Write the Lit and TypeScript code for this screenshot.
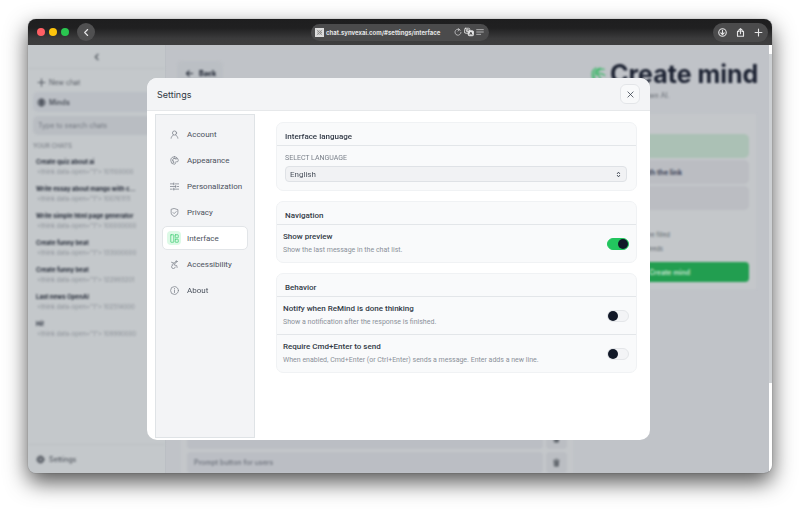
import { LitElement, html, css, svg } from "lit";
import { customElement, state } from "lit/decorators.js";

const icons = {
  back: svg`<path d="M15 4l-8 8 8 8" />`,
  arrow: svg`<path d="M20 12H4M11 5l-7 7 7 7" />`,
  plus: svg`<path d="M12 3v18M3 12h18" />`,
  close: svg`<path d="M5 5l14 14M19 5L5 19" />`,
  site: svg`<path d="M4 4l16 16M20 4L4 20" /><circle cx="12" cy="12" r="6" />`,
  reload: svg`<path d="M19 7a9 9 0 1 0 2 6M12 1l5 4-5 4" />`,
  translate: svg`<rect x="1" y="3" width="13" height="12" rx="3" /><path d="M4 7h7M7.500 6v1c0 3-2 4-3 5M6 9l4 3" /><rect x="10" y="9" width="13" height="12" rx="3" fill="currentColor" /><path d="M14 18l2.500-6 2.500 6M15 16h3" stroke="#444" />`,
  reader: svg`<path d="M2 5h20M2 12h20M2 19h12" />`,
  download: svg`<circle cx="12" cy="12" r="10" /><path d="M12 6v11M7.500 13l4.500 4.500 4.500-4.500" />`,
  share: svg`<path d="M8 9H4v13h16V9h-4M12 15V2M7.500 6L12 1.500 16.500 6" />`,
  account: svg`<circle cx="12" cy="8" r="5.500" /><path d="M3 22c.5-4.500 3-7 6-8.500M21 22c-.5-4.500-3-7-6-8.500" />`,
  palette: svg`<path d="M12 2a10 10 0 1 0 0 20c2 0 2.600-1.500 2-3-.8-2 .5-3.500 2.500-3.500H19c2 0 3-1.500 3-3.500 0-5.500-4.500-10-10-10z" /><circle cx="7" cy="11" r="1" /><circle cx="10.500" cy="6.800" r="1" /><circle cx="15.500" cy="7.500" r="1" /><circle cx="8.500" cy="16" r="1" />`,
  sliders: svg`<path d="M1 5h9M14 5h9M10 2.500v5M1 12h14M19 12h4M15 9.500v5M1 19h5M10 19h13M10 16.500v5" />`,
  shield: svg`<path d="M12 1.500l9 3V12c0 5.500-4 8.800-9 10.500C7 20.800 3 17.500 3 12V4.500z" /><path d="M8 12l3 3 5.500-5.500" />`,
  layout: svg`<rect x="2" y="2" width="8" height="20" rx="1" /><rect x="14" y="2" width="8" height="8" rx="1" /><rect x="14" y="14" width="8" height="8" rx="1" />`,
  accessibility: svg`<circle cx="17" cy="4" r="2" /><path d="M4 6l6 2 5-1-4 6 7 2 1 5M10 8l-4 4M8 13a5 5 0 1 0 6 6" />`,
  info: svg`<circle cx="12" cy="12" r="10.500" /><path d="M12 11v6.500M12 6.500v1" />`,
  updown: svg`<path d="M8 9l4-5 4 5M8 15l4 5 4-5" />`,
  brain: svg`<circle cx="12" cy="12" r="10" fill="currentColor" opacity=".6" /><path d="M12 3v18M7 7c2 0 3 1 3 3M17 7c-2 0-3 1-3 3M7 16c2 0 3-1 3-3M17 16c-2 0-3-1-3-3" />`,
  gear: svg`<circle cx="12" cy="12" r="8" fill="currentColor" /><circle cx="12" cy="12" r="10" stroke-dasharray="4 3" /><circle cx="12" cy="12" r="3" stroke="#c4c7cb" />`,
  trash: svg`<path d="M4 6h16M9 3h6" /><path d="M6 8h12l-1 14H7z" fill="currentColor" />`,
  leaf: svg`<path d="M9 3C3 6 1 14 6 21M7 19C5 12 8 6 15 3M10 12c1-5 5-8 11-7M10 12c4-2 8-1 12 2M10 13c3 1 6 4 6 9" />`,
};

const icon = (name: keyof typeof icons) =>
  html`<svg class="icon ${name}" viewBox="0 0 24 24" aria-hidden="true">${icons[name]}</svg>`;

const base = css`
  * { box-sizing: border-box; margin: 0; }
  button, input, select { font: inherit; color: inherit; }
  button { border: 0; background: none; padding: 0; display: flex; align-items: center; }
  ul { list-style: none; padding: 0; }
  a { color: inherit; text-decoration: none; }
  .icon { width: 9px; height: 9px; flex: none; fill: none; stroke: currentColor; stroke-width: 2; stroke-linecap: round; stroke-linejoin: round; }
`;

@customElement("browser-bar")
class BrowserBar extends LitElement {
  static styles = [base, css`
    :host { display: grid; grid-template-columns: 1fr 178px 1fr; align-items: center; height: 26px; padding: 0 4px; background: linear-gradient(#1e1e1f, #202021 35%, #3b3b3c 75%, #3e3e3f); color: #e4e4e5; }
    .side { display: flex; align-items: center; gap: 4px; padding-left: 5px; }
    .dot { width: 8px; height: 8px; border-radius: 50%; background: #ff5f64; }
    .dot.min { background: #fdc40c; }
    .dot.max { background: #2ac650; }
    .back-btn { width: 18px; height: 18px; border-radius: 50%; background: #505051; justify-content: center; margin-left: 4px; }
    .address { display: flex; align-items: center; height: 17px; border-radius: 9px; padding: 0 5px 0 4px; gap: 2px; background: #4b4b4c; font-size: 6px; font-weight: 700; }
    .address a { flex: 1; white-space: nowrap; }
    .favicon { width: 9px; height: 9px; background: #ddd; display: grid; place-items: center; color: #777; }
    .favicon .icon { width: 7px; height: 7px; }
    .address > button .icon { width: 8px; height: 8px; }
    .address > button .translate { width: 10px; height: 10px; }
    .tools { justify-self: end; display: flex; align-items: center; gap: 9px; height: 19px; padding: 0 5px; border-radius: 10px; background: #4b4b4c; }
    .tools .icon { stroke-width: 3; }
    .back { stroke-width: 3; }
  `];
  render() {
    return html`
      <div class="side">
        <span class="dot"></span><span class="dot min"></span><span class="dot max"></span>
        <button class="back-btn" aria-label="Back">${icon("back")}</button>
      </div>
      <div class="address">
        <span class="favicon">${icon("site")}</span>
        <a href="#settings/interface">chat.synvexai.com/#settings/interface</a>
        <button aria-label="Reload">${icon("reload")}</button>
        <button aria-label="Translate">${icon("translate")}</button>
        <button aria-label="Reader">${icon("reader")}</button>
      </div>
      <div class="tools">
        <button aria-label="Downloads">${icon("download")}</button>
        <button aria-label="Share">${icon("share")}</button>
        <button aria-label="New tab">${icon("plus")}</button>
      </div>`;
  }
}

const chats = [
  ["Create quiz about ai", "01100000"],
  ["Write essay about mango with c...", "00761111"],
  ["Write simple html page generator", "00000000"],
  ["Create funny beat", "33000000"],
  ["Create funny beat", "22993201"],
  ["Last news OpenAI", "02514000"],
  ["Hi!", "09990000"],
];

@customElement("chat-sidebar")
class ChatSidebar extends LitElement {
  static styles = [base, css`
    :host { display: flex; flex-direction: column; width: 138px; flex: none; background: #c4c8cb; color: #565b63; font-size: 7px; border-right: 1px solid #bbbfc4; }
    :host > * { filter: blur(.8px); }
    .collapse { height: 24px; justify-content: center; border-bottom: 1px solid #bcc0c4; flex: none; }
    .collapse .icon { width: 8px; height: 8px; stroke-width: 4; }
    .menu { padding: 3px 0 0 5px; }
    .entry { width: 100%; height: 20px; gap: 3px; padding-left: 4px; }
    .entry .icon { stroke-width: 3; }
    .minds { background: #bbbfc5; border-radius: 5px; font-weight: 600; height: 20px; color: #4b505a; }
    .search { display: block; width: 100%; height: 19px; margin-top: 4px; border: 0; border-radius: 5px; background: #b9bdc2; padding: 0 5px; }
    .search::placeholder { color: #737880; opacity: 1; }
    h2 { font-size: 6px; line-height: 8px; font-weight: 500; color: #7a7f86; padding: 7px 0 7px; }
    li { height: 27px; padding: 0 0 0 8px; white-space: nowrap; }
    li b, li small { display: block; }
    li b { font-size: 6px; line-height: 9px; font-weight: 700; color: #252b38; }
    li small { font-size: 6px; line-height: 12px; color: #8b9097; padding-left: 1px; }
    .foot { margin-top: auto; height: 29px; border-top: 1px solid #bcc0c4; padding-left: 8px; gap: 4px; font-weight: 500; }
  `];
  render() {
    return html`
      <button class="collapse" aria-label="Collapse">${icon("back")}</button>
      <div class="menu">
        <button class="entry">${icon("plus")} New chat</button>
        <button class="entry minds">${icon("brain")} Minds</button>
        <input class="search" placeholder="Type to search chats" aria-label="Search chats" />
        <h2>YOUR CHATS</h2>
      </div>
      <ul>${chats.map(([title, id]) => html`<li><b>${title}</b><small>&lt;think data-open="1"&gt; 1${id}</small></li>`)}</ul>
      <button class="foot">${icon("gear")} Settings</button>`;
  }
}

@customElement("mind-page")
class MindPage extends LitElement {
  static styles = [base, css`
    :host { display: flex; flex-direction: column; flex: 1; min-width: 0; padding: 0 13px 0 11px; color: #63686f; font-size: 6px; filter: blur(.8px); }
    header { display: flex; justify-content: space-between; height: 69px; flex: none; padding-top: 16px; }
    .back-btn { width: 46px; height: 24px; border-radius: 5px; gap: 5px; background: #bbbfc4; padding-left: 8px; font-size: 7px; font-weight: 800; color: #252b38; }
    .back-btn .icon { stroke-width: 3; }
    .title { display: flex; flex-direction: column; width: 166px; }
    h1 { display: flex; align-items: center; gap: 4px; white-space: nowrap; font-size: 25px; line-height: 26px; font-weight: 700; color: #1b2131; }
    .leaf { width: 16px; height: 16px; color: #37b865; }
    .title p { font-size: 7px; line-height: 18px; padding-left: 14px; }
    .cols { display: flex; align-items: flex-start; gap: 10px; flex: 1; min-height: 0; }
    .form { flex: 1; height: 100%; display: flex; flex-direction: column; justify-content: flex-end; gap: 3px; margin-left: 4px; padding: 0 6px; background: #c4c7ca; overflow: hidden; }
    .row { display: flex; gap: 3px; height: 21px; flex: none; }
    .row input { flex: 1; border: 0; border-radius: 4px; background: #bbbec4; padding: 0 7px; font-size: 7px; font-weight: 500; }
    .row input::placeholder { color: #6c717b; opacity: 1; }
    .row button { width: 21px; justify-content: center; border-radius: 4px; background: #bbbec3; }
    .card { width: 173px; height: 175px; padding: 20px 7px 7px; background: #c4c7ca; display: flex; flex-direction: column; gap: 2px; }
    .choice { height: 24px; border-radius: 5px; background: #bbbdc2; justify-content: flex-end; padding-right: 67px; font-size: 7px; font-weight: 700; color: #3e4458; }
    .choice.on { background: #abc1b5; }
    .note { line-height: 14px; text-align: right; padding-right: 79px; }
    .note.last { padding-right: 86px; }
    .notes { flex: 1; padding-top: 16px; }
    .create { height: 20px; border-radius: 4px; background: #229e50; color: #c9e6d3; justify-content: center; font-size: 7px; font-weight: 600; }
  `];
  render() {
    return html`
      <header>
        <button class="back-btn">${icon("arrow")} Back</button>
        <div class="title">
          <h1>${icon("leaf")} Create mind</h1>
          <p>Create your own AI.</p>
        </div>
      </header>
      <div class="cols">
        <div class="form">
          <div class="row"><input aria-label="Prompt" /><button aria-label="Remove">${icon("trash")}</button></div>
          <div class="row"><input placeholder="Prompt button for users" aria-label="Prompt button for users" /><button aria-label="Remove">${icon("trash")}</button></div>
        </div>
        <div class="card">
          <button class="choice on" aria-label="Public"></button>
          <button class="choice">With the link</button>
          <button class="choice" aria-label="Private"></button>
          <div class="notes">
            <p class="note">Name filled</p>
            <p class="note last">Needs</p>
          </div>
          <button class="create">Create mind</button>
        </div>
      </div>`;
  }
}

const sections: [keyof typeof icons, string][] = [
  ["account", "Account"],
  ["palette", "Appearance"],
  ["sliders", "Personalization"],
  ["shield", "Privacy"],
  ["layout", "Interface"],
  ["accessibility", "Accessibility"],
  ["info", "About"],
];

@customElement("settings-dialog")
class SettingsDialog extends LitElement {
  @state() private active = "Interface";

  static styles = [base, css`
    :host { display: flex; flex-direction: column; border-radius: 10px; background: #fff; overflow: hidden; color: #323a47; font-family: Roboto, Inter, sans-serif; font-size: 8px; }
    header { display: flex; align-items: center; justify-content: space-between; height: 33px; flex: none; padding: 0 10px; background: #f3f4f6; border-bottom: 1px solid #e6e8ea; }
    h1 { font-family: Inter, sans-serif; font-size: 9px; font-weight: 400; color: #303743; }
    .close-btn { width: 20px; height: 20px; justify-content: center; border: 1px solid #e3e5e8; border-radius: 6px; background: #f8f9fa; }
    .body { display: flex; flex: 1; min-height: 0; padding: 3px 13px 2px 8px; gap: 21px; }
    nav { width: 100px; flex: none; padding: 7px 6px; border: 1px solid #dfe3e6; background: #f3f4f6; }
    nav ul { display: grid; gap: 2px; }
    .tab { display: flex; align-items: center; gap: 6px; height: 24px; padding-left: 4px; border: 1px solid transparent; border-radius: 5px; color: #4b525d; }
    .glyph { width: 14px; height: 14px; border-radius: 4px; display: grid; place-items: center; color: #7c828b; }
    .tab.on { background: #fff; border-color: #e2e5e8; }
    .on .glyph { background: #dcf9e6; color: #45cf78; }
    main { flex: 1; min-width: 0; display: flex; flex-direction: column; gap: 10px; padding-top: 8px; }
    .card { border: 1px solid #f0f2f4; border-radius: 7px; background: #f9fafb; }
    h2 { font-size: 8px; font-weight: 500; line-height: 10px; padding: 9px 8px 3px; border-bottom: 1px solid #e3e6e9; }
    .field { display: block; padding: 8px 9px 8px 8px; }
    .field label { display: block; font-size: 7px; line-height: 9px; color: #7a808a; margin-bottom: 3px; }
    .select { display: grid; align-items: center; }
    select { grid-area: 1 / 1; appearance: none; width: 100%; height: 16px; border: 1px solid #dfe2e6; border-radius: 4px; background: #f1f2f4; padding: 0 4px; color: #4b525d; }
    .select .icon { grid-area: 1 / 1; justify-self: end; margin-right: 5px; width: 7px; height: 7px; stroke-width: 3; pointer-events: none; }
    .option { display: flex; align-items: center; justify-content: space-between; height: 37px; padding: 0 7px 0 6px; }
    .option + .option { border-top: 1px solid #e3e6e9; height: 38px; }
    .option label { font-weight: 500; line-height: 12px; display: block; }
    .option p { font-size: 7px; line-height: 14px; color: #8b919a; }
    .toggle { appearance: none; flex: none; width: 22px; height: 12px; padding: 0; border: 1px solid #e4e6e9; border-radius: 6px; background: #f3f4f6; display: flex; }
    .toggle::before { content: ""; width: 10px; height: 10px; border-radius: 50%; background: #111827; }
    .toggle:checked { background: #22c55e; border-color: #22c55e; justify-content: flex-end; }
  `];

  private option(id: string, title: string, text: string, on = false) {
    return html`<div class="option">
      <div><label for=${id}>${title}</label><p>${text}</p></div>
      <input class="toggle" type="checkbox" id=${id} ?checked=${on} />
    </div>`;
  }

  render() {
    return html`
      <header><h1>Settings</h1><button class="close-btn" aria-label="Close">${icon("close")}</button></header>
      <div class="body">
        <nav><ul>
          ${sections.map(([name, label]) => html`<li>
            <a class="tab ${label === this.active ? "on" : ""}" href="#settings/${label.toLowerCase()}" @click=${() => (this.active = label)}>
              <span class="glyph">${icon(name)}</span>${label}
            </a></li>`)}
        </ul></nav>
        <main>
          <section class="card">
            <h2>Interface language</h2>
            <div class="field">
              <label for="language">SELECT LANGUAGE</label>
              <div class="select"><select id="language"><option>English</option></select>${icon("updown")}</div>
            </div>
          </section>
          <section class="card">
            <h2>Navigation</h2>
            ${this.option("preview", "Show preview", "Show the last message in the chat list.", true)}
          </section>
          <section class="card">
            <h2>Behavior</h2>
            ${this.option("notify", "Notify when ReMind is done thinking", "Show a notification after the response is finished.")}
            ${this.option("enter", "Require Cmd+Enter to send", "When enabled, Cmd+Enter (or Ctrl+Enter) sends a message. Enter adds a new line.")}
          </section>
        </main>
      </div>`;
  }
}

@customElement("app-root")
class AppRoot extends LitElement {
  static styles = [base, css`
    :host { display: flex; min-height: 100vh; box-sizing: border-box; padding: 19px 28px 37px; background: #fff; font-family: Inter, "Noto Sans", sans-serif; }
    .window { flex: 1; min-width: 0; display: flex; flex-direction: column; border-radius: 8px; overflow: hidden; background: #c0c3c8; box-shadow: 0 0 1px rgba(0, 0, 0, .5), 0 9px 22px rgba(0, 0, 0, .68); }
    .page { position: relative; flex: 1; display: grid; min-height: 0; }
    .under { display: flex; min-height: 0; overflow: hidden; grid-area: 1 / 1; }
    .scroll { width: 3px; flex: none; background: linear-gradient(#fff 9px, #cdd0d3 9px, #cdd0d3 79%, #fff 79%); }
    .dialog { grid-area: 1 / 1; z-index: 1; margin: 33px 122px 33px 119px; }
  `];
  render() {
    return html`
      <div class="window">
        <browser-bar></browser-bar>
        <div class="page">
          <div class="under">
            <chat-sidebar></chat-sidebar>
            <mind-page></mind-page>
            <div class="scroll"></div>
          </div>
          <settings-dialog class="dialog"></settings-dialog>
        </div>
      </div>`;
  }
}
